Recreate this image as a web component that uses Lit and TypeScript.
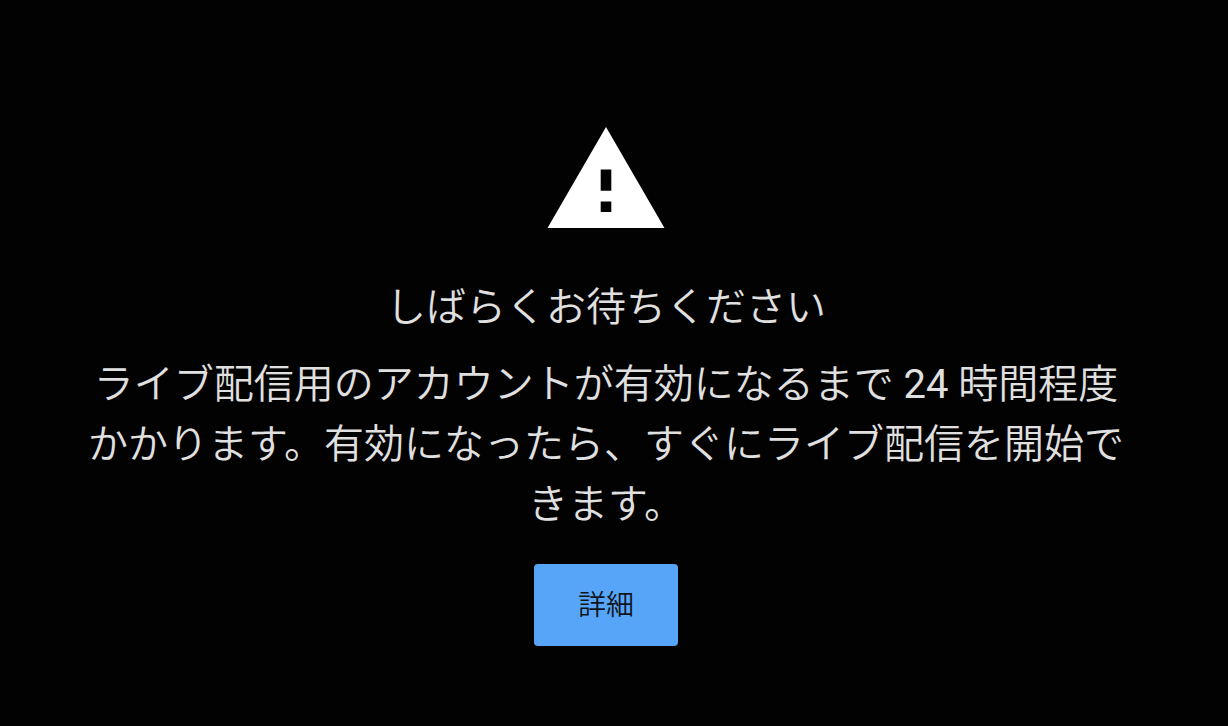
import { LitElement, html, css } from "lit";
import { customElement } from "lit/decorators.js";

@customElement("app-root")
export class AppRoot extends LitElement {
  static styles = css`
    :host {
      display: block;
      min-height: 100vh;
      background: #020202;
      color: #e0e0e0;
      font-family: Roboto, "Noto Sans CJK JP", sans-serif;
      font-weight: 350;
    }
    .notice {
      box-sizing: border-box;
      display: flex;
      flex-direction: column;
      align-items: center;
      min-height: 100vh;
      padding: 127px 100px 80px 84px;
      text-align: center;
    }
    .icon {
      display: block;
      width: 118px;
      height: 101px;
    }
    h1,
    p {
      margin: 0;
      font-size: 40px;
      font-weight: inherit;
      line-height: 60px;
    }
    h1 {
      margin-top: 50px;
    }
    p {
      margin-top: 17px;
    }
    .number {
      font-weight: 400;
    }
    button {
      margin-top: 29px;
      height: 82px;
      padding: 0 44px 4px;
      border: 0;
      border-radius: 4px;
      background: #57a5f8;
      color: #10151c;
      font: inherit;
      font-size: 28px;
      cursor: pointer;
    }
  `;

  render() {
    return html`
      <main class="notice">
        <svg class="icon" viewBox="0 0 22 19" aria-hidden="true">
          <path fill="#fff" d="M0 19h22L11 0 0 19zm12-3h-2v-2h2v2zm0-4h-2V8h2v4z" />
        </svg>
        <h1>しばらくお待ちください</h1>
        <p>
          ライブ配信用のアカウントが有効になるまで <span class="number">24</span> 時間程度かかります。有効になったら、すぐにライブ配信を開始できます。
        </p>
        <button type="button">詳細</button>
      </main>
    `;
  }
}
